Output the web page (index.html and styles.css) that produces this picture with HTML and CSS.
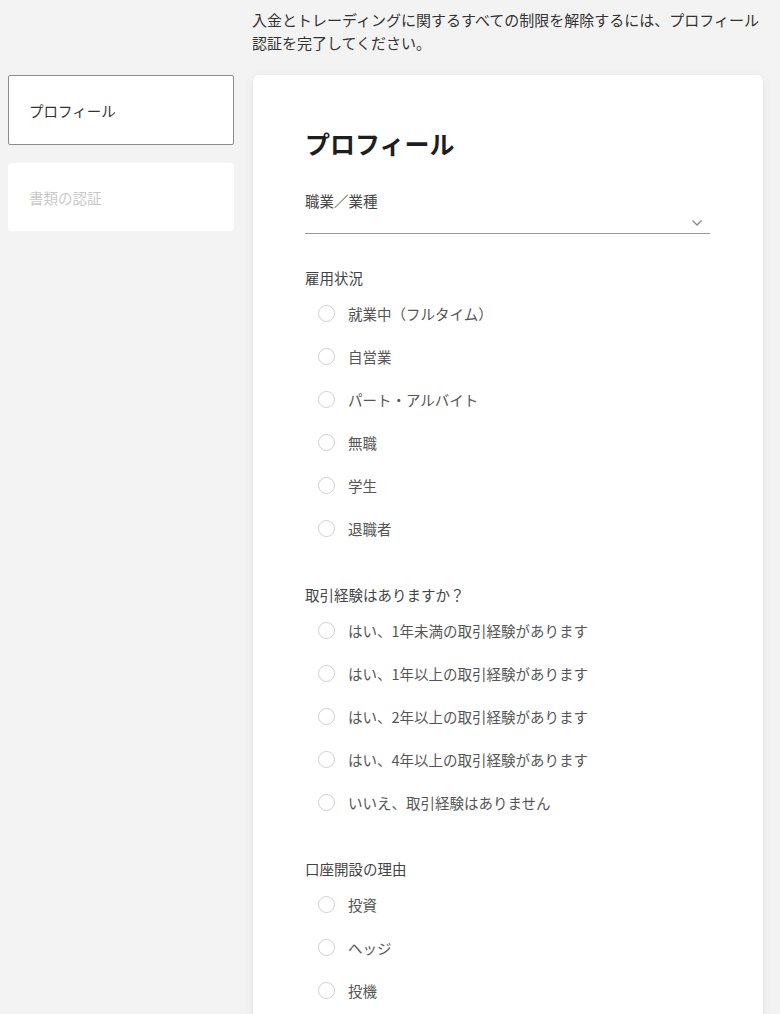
FILE: index.html
```html
<!DOCTYPE html>
<html lang="ja">
<head>
<meta charset="utf-8">
<title>プロフィール</title>
<link rel="stylesheet" href="styles.css">
</head>
<body>
<div class="page">
  <p class="intro">入金とトレーディングに関するすべての制限を解除するには、プロフィール認証を完了してください。</p>
  <nav class="steps">
    <div class="step step-active">プロフィール</div>
    <div class="step step-disabled">書類の認証</div>
  </nav>
  <main class="card">
    <h1 class="title">プロフィール</h1>
    <div class="field">
      <div class="label">職業／業種</div>
      <div class="select">
        <svg class="chevron" width="12" height="8" viewBox="0 0 12 8"><path d="M1.5 1.5 L6 6 L10.5 1.5" fill="none" stroke="#8a8a8a" stroke-width="1.3"/></svg>
      </div>
    </div>
    <div class="group">
      <div class="label">雇用状況</div>
      <div class="radio"><span class="dot"></span><span>就業中（フルタイム）</span></div>
      <div class="radio"><span class="dot"></span><span>自営業</span></div>
      <div class="radio"><span class="dot"></span><span>パート・アルバイト</span></div>
      <div class="radio"><span class="dot"></span><span>無職</span></div>
      <div class="radio"><span class="dot"></span><span>学生</span></div>
      <div class="radio"><span class="dot"></span><span>退職者</span></div>
    </div>
    <div class="group">
      <div class="label">取引経験はありますか？</div>
      <div class="radio"><span class="dot"></span><span>はい、1年未満の取引経験があります</span></div>
      <div class="radio"><span class="dot"></span><span>はい、1年以上の取引経験があります</span></div>
      <div class="radio"><span class="dot"></span><span>はい、2年以上の取引経験があります</span></div>
      <div class="radio"><span class="dot"></span><span>はい、4年以上の取引経験があります</span></div>
      <div class="radio"><span class="dot"></span><span>いいえ、取引経験はありません</span></div>
    </div>
    <div class="group">
      <div class="label">口座開設の理由</div>
      <div class="radio"><span class="dot"></span><span>投資</span></div>
      <div class="radio"><span class="dot"></span><span>ヘッジ</span></div>
      <div class="radio"><span class="dot"></span><span>投機</span></div>
    </div>
  </main>
</div>
</body>
</html>
```
FILE: styles.css
```css
* { box-sizing: border-box; }
html, body {
  margin: 0;
  padding: 0;
  background: #f3f3f3;
  font-family: "Noto Sans CJK JP", "Noto Sans", sans-serif;
  color: #333;
}
.page {
  display: grid;
  grid-template-columns: 226px 510px;
  column-gap: 19px;
  row-gap: 21px;
  padding: 8px 17px 0 8px;
  align-items: start;
}
.intro {
  grid-column: 2;
  grid-row: 1;
  margin: 0 -8px 0 -1px;
  font-size: 15px;
  line-height: 23px;
  letter-spacing: 0;
  color: #333;
}
.steps {
  grid-column: 1;
  grid-row: 2;
  display: flex;
  flex-direction: column;
  gap: 18px;
}
.step {
  background: #fff;
  display: flex;
  align-items: center;
  padding-left: 21px;
  font-size: 14.5px;
}
.step-active {
  height: 70px;
  border: 1px solid #8c8c8c;
  border-radius: 2px;
  padding-left: 20px;
  color: #333;
}
.step-disabled {
  height: 68px;
  border-radius: 4px;
  color: #c9c9c9;
}
.card {
  grid-column: 2;
  grid-row: 2;
  background: #fff;
  border-radius: 6px;
  box-shadow: 0 2px 12px rgba(0, 0, 0, 0.07);
  padding: 52px 53px 40px 52px;
  min-height: 960px;
}
.title {
  margin: 0;
  font-size: 25px;
  line-height: 32px;
  font-weight: 700;
  color: #1e1e1e;
}
.field {
  margin-top: 31px;
}
.label {
  font-size: 14.5px;
  line-height: 22px;
  color: #444;
}
.select {
  height: 22px;
  border-bottom: 1px solid #9a9a9a;
  display: flex;
  justify-content: flex-end;
  align-items: center;
  padding-right: 7px;
}
.chevron { display: block; margin-top: 1px; }
.group {
  margin-top: 33px;
}
.group + .group {
  margin-top: 34px;
}
.group .label {
  margin-bottom: 3px;
}
.radio {
  height: 43px;
  display: flex;
  align-items: center;
  gap: 13px;
  padding-left: 13px;
  font-size: 14.5px;
  color: #555;
}
.dot {
  width: 17px;
  height: 17px;
  border-radius: 50%;
  border: 1px solid #cfcfcf;
  flex: none;
}
```
